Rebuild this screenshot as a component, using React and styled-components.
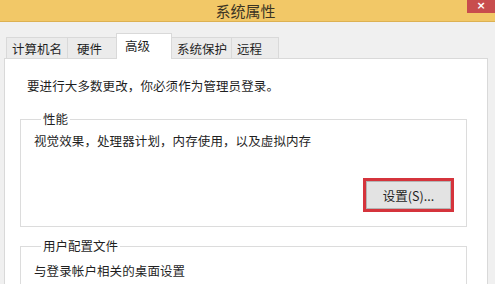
import React from "react";
import styled, { createGlobalStyle } from "styled-components";

const Global = createGlobalStyle`
  html, body { margin: 0; padding: 0; background: #f0f0f0; }
  body { font-family: "Noto Sans CJK SC", "Noto Sans", sans-serif; color: #1f1f1f; }
`;

const Window = styled.div`
  width: 495px;
  height: 284px;
  overflow: hidden;
  background: #f0f0f0;
  display: flex;
  flex-direction: column;
`;

const TitleBar = styled.div`
  height: 21px;
  flex: none;
  background: #f2c867;
  border-bottom: 1px solid #ddb152;
  display: grid;
  grid-template-columns: 1fr auto 1fr;
`;

const Title = styled.div`
  grid-column: 2;
  font-size: 15px;
  line-height: 21px;
  color: #3b3424;
  padding-right: 4px;
`;

const CloseButton = styled.div`
  grid-column: 3;
  justify-self: end;
  align-self: start;
  width: 28px;
  height: 13px;
  background: #c84d4d;
  color: #fff;
  font-family: "DejaVu Sans", sans-serif;
  font-size: 11px;
  font-weight: bold;
  line-height: 12px;
  text-align: center;
`;

const Body = styled.div`
  flex: 1;
  padding: 11px 0 0 4px;
  width: 484px;
  display: flex;
  flex-direction: column;
`;

const TabRow = styled.div`
  display: flex;
  align-items: flex-end;
  padding-left: 3px;
  position: relative;
  z-index: 1;
  margin-bottom: -1px;
`;

const Tab = styled.div`
  box-sizing: border-box;
  width: ${(p) => p.$w}px;
  height: ${(p) => (p.$active ? 26 : 22)}px;
  margin-left: -1px;
  padding: 0 0 ${(p) => (p.$active ? 3 : 0)}px ${(p) => p.$pl}px;
  border: 1px solid #d9d9d9;
  border-bottom: ${(p) => (p.$active ? "none" : "1px solid #d9d9d9")};
  background: ${(p) => (p.$active ? "#ffffff" : "#ebebeb")};
  font-size: 12.5px;
  display: flex;
  align-items: center;
  color: #1f1f1f;
  white-space: nowrap;
`;

const Panel = styled.div`
  flex: 1;
  background: #ffffff;
  border: 1px solid #d9d9d9;
  padding: 19px 20px 0 15px;
  display: flex;
  flex-direction: column;
`;

const Note = styled.div`
  font-size: 12.5px;
  line-height: 16px;
  padding-left: 7px;
  letter-spacing: 0.1px;
`;

const Group = styled.fieldset`
  margin: ${(p) => p.$mt}px 0 0 0;
  width: 447px;
  box-sizing: border-box;
  border: 1px solid #dcdcdc;
  padding: ${(p) => p.$pt}px 12px ${(p) => p.$pb}px 13px;
  display: flex;
  flex-direction: column;
  min-width: 0;
`;

const Legend = styled.legend`
  margin-left: 7px;
  padding: 0 2px;
  font-size: 12.5px;
  line-height: 16px;
  color: #1f1f1f;
`;

const GroupText = styled.div`
  font-size: 12.5px;
  line-height: 16px;
  letter-spacing: 0.1px;
`;

const ButtonRow = styled.div`
  display: flex;
  justify-content: flex-end;
  margin-top: 29px;
`;

const Highlight = styled.div`
  border: 3px solid #d5343c;
  display: flex;
`;

const Button = styled.div`
  width: 83px;
  height: 26px;
  background: #e3e3e3;
  border: 1px solid #b4b4b4;
  font-size: 12.5px;
  display: flex;
  align-items: center;
  justify-content: center;
  color: #1f1f1f;
`;

const tabs = [
  { label: "计算机名", w: 62, pl: 5 },
  { label: "硬件", w: 50, pl: 9 },
  { label: "高级", w: 56, pl: 8, active: true },
  { label: "系统保护", w: 61, pl: 5 },
  { label: "远程", w: 48, pl: 5 },
];

export default function App() {
  return (
    <Window>
      <Global />
      <TitleBar>
        <Title>系统属性</Title>
        <CloseButton>×</CloseButton>
      </TitleBar>
      <Body>
        <TabRow>
          {tabs.map((t) => (
            <Tab key={t.label} $w={t.w} $pl={t.pl} $active={t.active}>
              {t.label}
            </Tab>
          ))}
        </TabRow>
        <Panel>
          <Note>要进行大多数更改，你必须作为管理员登录。</Note>
          <Group $mt={17} $pt={6} $pb={14}>
            <Legend>性能</Legend>
            <GroupText>视觉效果，处理器计划，内存使用，以及虚拟内存</GroupText>
            <ButtonRow>
              <Highlight>
                <Button>设置(S)...</Button>
              </Highlight>
            </ButtonRow>
          </Group>
          <Group $mt={11} $pt={9} $pb={20}>
            <Legend>用户配置文件</Legend>
            <GroupText>与登录帐户相关的桌面设置</GroupText>
          </Group>
        </Panel>
      </Body>
    </Window>
  );
}
